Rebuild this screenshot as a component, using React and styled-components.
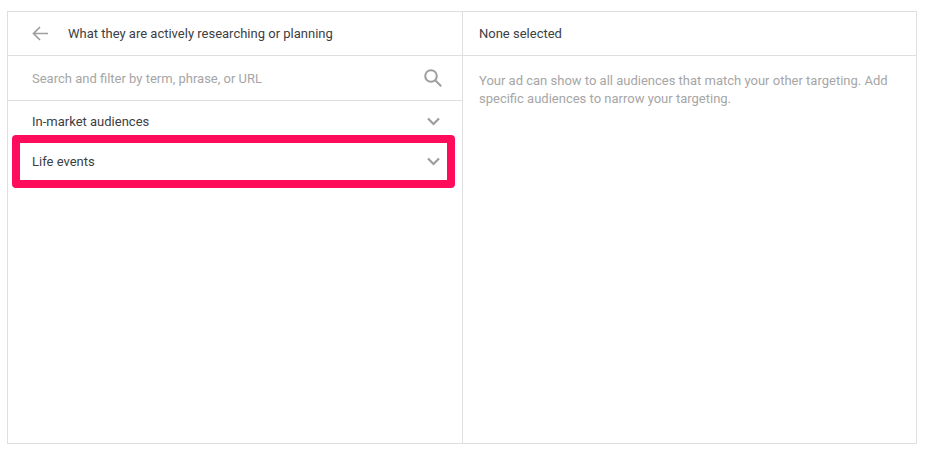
import React from 'react';
import styled, { createGlobalStyle } from 'styled-components';

const GlobalStyle = createGlobalStyle`
  html, body {
    margin: 0;
    padding: 0;
    background: #fff;
    font-family: Roboto, "Liberation Sans", sans-serif;
  }
`;

const Panel = styled.div`
  box-sizing: border-box;
  width: 910px;
  height: 433px;
  margin: 11px 0 0 7px;
  border: 1px solid #dfdfdf;
  display: grid;
  grid-template-columns: 455px 1fr;
`;

const Column = styled.div`
  display: flex;
  flex-direction: column;
  min-width: 0;
  border-right: ${props => (props.$divider ? '1px solid #dfdfdf' : 'none')};
`;

const Header = styled.div`
  box-sizing: border-box;
  height: 44px;
  flex: none;
  display: flex;
  align-items: center;
  padding-left: ${props => props.$inset}px;
  border-bottom: 1px solid #dfdfdf;
  font-size: 13px;
  color: #3c4043;
`;

const BackIcon = styled.svg`
  width: 16px;
  height: 15px;
  margin-right: 20px;
  color: #9e9e9e;
`;

const Search = styled.div`
  box-sizing: border-box;
  height: 45px;
  flex: none;
  display: flex;
  align-items: center;
  justify-content: space-between;
  padding: 0 20px 0 24px;
  border-bottom: 1px solid #dfdfdf;
  font-size: 13px;
  color: #a6a6a6;
`;

const SearchIcon = styled.svg`
  width: 18px;
  height: 18px;
  margin-top: -1px;
  color: #9e9e9e;
`;

const Row = styled.div`
  position: relative;
  box-sizing: border-box;
  height: 40px;
  flex: none;
  display: flex;
  align-items: center;
  justify-content: space-between;
  padding: 0 22px 0 24px;
  font-size: 13px;
  color: #3c4043;
`;

const Chevron = styled.svg`
  width: 13px;
  height: 9px;
  color: #9e9e9e;
`;

// annotation drawn on top of the screenshot, not part of the list itself
const Highlight = styled.div`
  position: absolute;
  left: 4px;
  right: 7px;
  top: -6px;
  bottom: -7px;
  box-sizing: border-box;
  border: 8px solid #ff0d5c;
  border-radius: 4px;
  pointer-events: none;
`;

const Hint = styled.p`
  margin: 0;
  padding: 16px 24px 0 16px;
  font-size: 13px;
  line-height: 18px;
  color: #a6a6a6;
`;

const ChevronDown = () => (
  <Chevron viewBox="0 0 13 9" fill="none" stroke="currentColor" strokeWidth="2.2">
    <path d="M1 1.500 6.500 7 12 1.500" />
  </Chevron>
);

export default function App() {
  return (
    <>
      <GlobalStyle />
      <Panel>
        <Column $divider>
          <Header $inset={24}>
            <BackIcon viewBox="0 0 16 15" fill="none" stroke="currentColor" strokeWidth="1.700">
              <path d="M16 7.500H1.500M8 1 1.500 7.500 8 14" />
            </BackIcon>
            What they are actively researching or planning
          </Header>
          <Search>
            Search and filter by term, phrase, or URL
            <SearchIcon viewBox="0 0 18 18" fill="none" stroke="currentColor" strokeWidth="2">
              <circle cx="7" cy="7" r="5.800" />
              <path d="m11.200 11.200 6 6" />
            </SearchIcon>
          </Search>
          <Row>
            In-market audiences
            <ChevronDown />
          </Row>
          <Row>
            Life events
            <ChevronDown />
            <Highlight />
          </Row>
        </Column>
        <Column>
          <Header $inset={16}>None selected</Header>
          <Hint>
            Your ad can show to all audiences that match your other targeting. Add specific audiences to narrow your targeting.
          </Hint>
        </Column>
      </Panel>
    </>
  );
}
